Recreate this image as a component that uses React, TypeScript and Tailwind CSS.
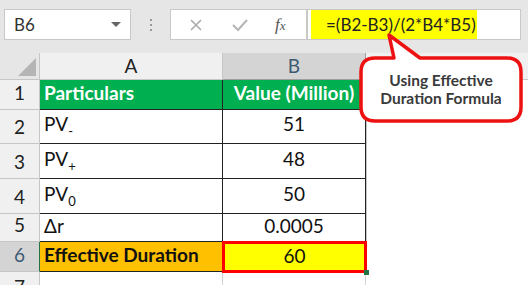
import React from "react";

const rows = [
  { n: "1", h: "h-[30px]" },
  { n: "2", h: "h-[34px]" },
  { n: "3", h: "h-[35px]" },
  { n: "4", h: "h-[35px]" },
  { n: "5", h: "h-[28px]" },
  { n: "6", h: "h-[30px]" },
];

const Sub = ({ children }: { children: React.ReactNode }) => (
  <sub className="relative top-[5px] align-baseline text-[13px]">{children}</sub>
);

export default function App() {
  return (
    <div className="relative h-[285px] w-[528px] overflow-hidden bg-white font-['Lato',sans-serif] text-[#111]">
      {/* formula bar */}
      <div className="flex h-[53px] items-start bg-[#e6e6e6] pt-[9px] pl-[4px]">
        <div className="flex h-[31px] w-[127px] items-center justify-between border border-[#c8c8c8] bg-white pl-[9px] pr-[9px] text-[17px] text-[#333]">
          <span>B6</span>
          <span className="h-0 w-0 border-x-[5px] border-t-[5px] border-x-transparent border-t-[#666]" />
        </div>
        <div className="flex h-[31px] w-[39px] flex-col items-center justify-center gap-[3px]">
          <span className="h-[2px] w-[2px] bg-[#999]" />
          <span className="h-[2px] w-[2px] bg-[#999]" />
          <span className="h-[2px] w-[2px] bg-[#999]" />
        </div>
        <div className="flex h-[31px] w-[137px] items-center border border-[#c8c8c8] bg-white">
          <svg width="16" height="16" viewBox="0 0 16 16" className="ml-[17px]">
            <path d="M3 3 L13 13 M13 3 L3 13" stroke="#aaa" strokeWidth="1.6" />
          </svg>
          <svg width="18" height="16" viewBox="0 0 18 16" className="ml-[27px]">
            <path d="M2 8 L7 13 L16 3" stroke="#b5b5b5" strokeWidth="2" fill="none" />
          </svg>
          <span className="ml-[26px] font-['Liberation_Serif',serif] text-[17px] italic text-[#555]">
            f<span className="text-[13px]">x</span>
          </span>
        </div>
        <div className="flex h-[31px] w-[214px] items-center border border-[#c8c8c8] bg-white pl-[3px]">
          <span className="flex h-[29px] w-[166px] items-center bg-[#ffff00] pl-[15px] text-[17px] text-[#222]">
            =(B2-B3)/(2*B4*B5)
          </span>
        </div>
      </div>

      {/* sheet */}
      <div className="grid grid-cols-[40px_183px_143px_1fr] text-[19px]">
        {/* header row */}
        <div className="relative h-[27px] border-r border-b border-[#c6c6c6] bg-[#e6e6e6]">
          <span className="absolute right-[3px] bottom-[3px] h-0 w-0 border-b-[18px] border-l-[18px] border-b-[#b5b5b5] border-l-transparent" />
        </div>
        <div className="flex h-[27px] items-center justify-center border-r border-b border-[#c6c6c6] bg-[#f0f0f0] text-[#222]">
          A
        </div>
        <div className="flex h-[27px] items-center justify-center border-r border-b border-[#9e9e9e] bg-[#d4d4d4] text-[#3d5a73]">
          B
        </div>
        <div className="h-[27px] border-b border-[#c6c6c6] bg-[#f0f0f0]" />

        {rows.map((r, i) => {
          const sel = r.n === "6";
          return (
            <React.Fragment key={r.n}>
              <div
                className={`flex ${r.h} items-end justify-center border-b border-r pb-[2px] ${
                  sel
                    ? "border-r-[#217346] border-b-[#c6c6c6] bg-[#d4d4d4] text-[#3d5a73]"
                    : "border-[#c6c6c6] bg-[#f0f0f0] text-[#222]"
                }`}
              >
                {r.n}
              </div>
              {i === 0 && (
                <>
                  <div className="flex h-[30px] items-end border-b border-r border-[#222] bg-[#00b050] pb-[2px] pl-[4px] font-bold text-white">
                    Particulars
                  </div>
                  <div className="flex h-[30px] items-end justify-center border-b border-r border-[#222] bg-[#00b050] pb-[2px] font-bold text-white">
                    Value (Million)
                  </div>
                </>
              )}
              {i === 1 && (
                <>
                  <div className="flex h-[34px] items-end border-b border-r border-[#222] pb-[5px] pl-[4px]">
                    <span>
                      PV<Sub>-</Sub>
                    </span>
                  </div>
                  <div className="flex h-[34px] items-end justify-center border-b border-r border-[#222] pb-[5px]">
                    51
                  </div>
                </>
              )}
              {i === 2 && (
                <>
                  <div className="flex h-[35px] items-end border-b border-r border-[#222] pb-[5px] pl-[4px]">
                    <span>
                      PV<Sub>+</Sub>
                    </span>
                  </div>
                  <div className="flex h-[35px] items-end justify-center border-b border-r border-[#222] pb-[5px]">
                    48
                  </div>
                </>
              )}
              {i === 3 && (
                <>
                  <div className="flex h-[35px] items-end border-b border-r border-[#222] pb-[5px] pl-[4px]">
                    <span>
                      PV<Sub>0</Sub>
                    </span>
                  </div>
                  <div className="flex h-[35px] items-end justify-center border-b border-r border-[#222] pb-[5px]">
                    50
                  </div>
                </>
              )}
              {i === 4 && (
                <>
                  <div className="flex h-[28px] items-end border-b border-r border-[#222] pb-[1px] pl-[4px]">
                    Δr
                  </div>
                  <div className="flex h-[28px] items-end justify-center border-b border-r border-[#222] pb-[1px]">
                    0.0005
                  </div>
                </>
              )}
              {i === 5 && (
                <>
                  <div className="flex h-[30px] items-end border-b border-r border-[#222] bg-[#ffc000] pb-[2px] pl-[4px] font-bold">
                    Effective Duration
                  </div>
                  <div className="relative flex h-[30px] items-end justify-center bg-[#ffff00] pb-[2px] outline-[3px] outline-offset-[-2px] outline-[#ff0000] outline-solid">
                    60
                    <span className="absolute -right-[3px] -bottom-[3px] h-[5px] w-[5px] bg-[#217346]" />
                  </div>
                </>
              )}
              <div className={`${r.h} border-l border-[#c6c6c6]`} />
            </React.Fragment>
          );
        })}
        <div className="h-[20px] border-r border-[#c6c6c6] bg-[#f0f0f0] pt-[1px] text-center text-[#222]">
          7
        </div>
        <div className="h-[20px] border-r border-[#d4d4d4]" />
        <div className="h-[20px] border-r border-[#d4d4d4]" />
        <div className="h-[20px]" />
      </div>

      {/* callout */}
      <svg className="absolute top-0 left-0" width="528" height="285">
        <path
          d="M375 58 L394 58 L389 35 L420 58 L507 58 Q521 58 521 72 L521 107 Q521 121 507 121 L375 121 Q361 121 361 107 L361 72 Q361 58 375 58 Z"
          fill="#fff"
          stroke="#ee1111"
          strokeWidth="3.5"
          strokeLinejoin="round"
        />
      </svg>
      <div className="absolute top-[71px] left-[361px] w-[160px] text-center text-[15.5px] leading-[18px] font-bold text-[#3a3a3a]">
        Using Effective
        <br />
        Duration Formula
      </div>
    </div>
  );
}
